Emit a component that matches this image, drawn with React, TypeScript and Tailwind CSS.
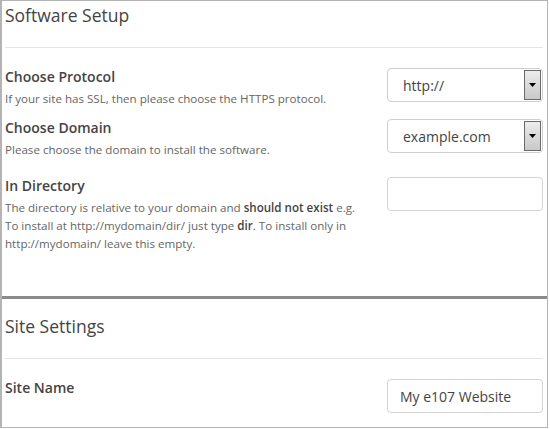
import React from "react";

const font = { fontFamily: '"Open Sans", "Noto Sans", sans-serif' };

function Select({ value }: { value: string }) {
  return (
    <div className="relative w-[156px] h-[34px] border border-[#cfcfcf] rounded-[4px] bg-white flex items-center shrink-0">
      <span className="pl-[15px] text-[14px] text-[#444]">{value}</span>
      <div className="absolute right-[1px] top-[1px] bottom-[1px] w-[17px] border border-[#6a6a6a] bg-gradient-to-b from-[#ececec] to-[#c9c9c9] flex items-center justify-center">
        <svg width="7" height="4" viewBox="0 0 7 4">
          <path d="M0 0 H7 L3.5 4 Z" fill="#000" />
        </svg>
      </div>
    </div>
  );
}

function Input({ value }: { value?: string }) {
  return (
    <div className="w-[156px] h-[34px] border border-[#d4d4d4] rounded-[4px] bg-white flex items-center shrink-0">
      {value && <span className="pl-[12px] text-[14px] text-[#444]">{value}</span>}
    </div>
  );
}

export default function App() {
  return (
    <div style={font} className="w-[548px] h-[428px] bg-white border-t border-r border-b border-l-2 border-[#b4b4b4] flex flex-col overflow-hidden">
      <div className="pl-[3px] pr-[4px] pt-[2px] h-[295px]">
        <h2 className="text-[17.5px] leading-[24px] text-[#444] font-normal">Software Setup</h2>
        <div className="mt-[20px] h-px bg-[#e3e6e3]" />
        <div className="mt-[20px] flex justify-between items-start">
          <div>
            <div className="text-[14px] leading-[18px] font-semibold text-[#444]">Choose Protocol</div>
            <div className="mt-[4px] text-[11.6px] leading-[18px] text-[#666] whitespace-nowrap">If your site has SSL, then please choose the HTTPS protocol.</div>
          </div>
          <Select value="http://" />
        </div>
        <div className="mt-[11px] flex justify-between items-start">
          <div>
            <div className="text-[14px] leading-[18px] font-semibold text-[#444]">Choose Domain</div>
            <div className="mt-[4px] text-[11.6px] leading-[18px] text-[#666] whitespace-nowrap">Please choose the domain to install the software.</div>
          </div>
          <Select value="example.com" />
        </div>
        <div className="mt-[18px] flex justify-between items-start">
          <div>
            <div className="text-[14px] leading-[18px] font-semibold text-[#444]">In Directory</div>
            <div className="mt-[4px] text-[11.6px] leading-[18px] text-[#666] whitespace-nowrap">
              The directory is relative to your domain and <b className="font-semibold text-[#444]">should not exist</b> e.g.
              <br />
              To install at http://mydomain/dir/ just type <b className="font-semibold text-[#444]">dir</b>. To install only in
              <br />
              http://mydomain/ leave this empty.
            </div>
          </div>
          <Input />
        </div>
      </div>
      <div className="h-[3px] bg-[#8a8a8a] shrink-0" />
      <div className="pl-[3px] pr-[4px] pt-[15px]">
        <h2 className="text-[17.5px] leading-[24px] text-[#444] font-normal">Site Settings</h2>
        <div className="mt-[20px] h-px bg-[#e6e3e6]" />
        <div className="mt-[20px] flex justify-between items-start">
          <div className="text-[14px] leading-[18px] font-semibold text-[#444]">Site Name</div>
          <Input value="My e107 Website" />
        </div>
      </div>
    </div>
  );
}
